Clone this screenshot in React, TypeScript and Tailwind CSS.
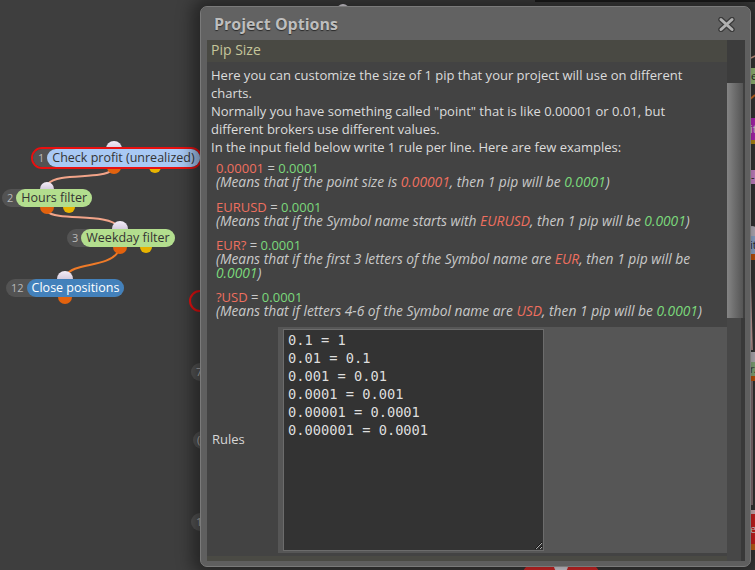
import React from "react";

const R = ({ children }: { children: React.ReactNode }) => (
  <span className="text-[#ef6f5f]">{children}</span>
);
const G = ({ children }: { children: React.ReactNode }) => (
  <span className="text-[#7bd97b]">{children}</span>
);

type NodeProps = {
  left: number;
  top: number;
  num: string;
  label: string;
  pill: string;
  selected?: boolean;
};

function GraphNode({ left, top, num, label, pill, selected }: NodeProps) {
  const inner = (
    <div className="flex h-[18px] items-center rounded-full bg-[#535353] font-['Open_Sans',sans-serif]">
      <span className="pl-[5px] pr-[3px] text-[11px] leading-[18px] text-[#b8b8b8]">{num}</span>
      <span className={`h-[18px] rounded-full px-[5px] text-[12.5px] leading-[18px] whitespace-nowrap ${pill}`}>
        {label}
      </span>
    </div>
  );
  return (
    <div className="absolute" style={{ left, top }}>
      {selected ? (
        <div className="rounded-full border-2 border-[#e81010]">{inner}</div>
      ) : (
        inner
      )}
    </div>
  );
}

function Dot({ x, y, r, cls }: { x: number; y: number; r: number; cls: string }) {
  return (
    <div
      className={`absolute rounded-full ${cls}`}
      style={{ left: x - r, top: y - r, width: r * 2, height: r * 2 }}
    />
  );
}

function Example({
  head,
  children,
  className,
}: {
  head: React.ReactNode;
  children: React.ReactNode;
  className: string;
}) {
  return (
    <div className={className}>
      <div>{head}</div>
      <div className="text-[13.8px] italic">{children}</div>
    </div>
  );
}

export default function App() {
  return (
    <div className="relative h-[570px] w-[755px] overflow-hidden bg-[#3e3e3e] font-['Open_Sans',sans-serif]">
      {/* top dark edge of another panel */}
      <div className="absolute left-[535px] top-0 h-[2px] w-[220px] bg-[#1c1c1c]" />

      {/* graph wires */}
      <svg className="absolute left-0 top-0" width="755" height="570">
        <path d="M112 170 C 102 180, 58 172, 48 184" stroke="#f2a489" strokeWidth="2" fill="none" />
        <path d="M47 211 C 56 222, 108 212, 119 227" stroke="#f2a489" strokeWidth="2" fill="none" />
        <path d="M118 252 C 108 268, 72 262, 66 276" stroke="#ee7a28" strokeWidth="2" fill="none" />
        <path d="M751 58 L755 56" stroke="#f2b4a0" strokeWidth="1.5" fill="none" />
        <path d="M749 100 L755 95" stroke="#ee7a28" strokeWidth="2" fill="none" />
        <path d="M750 270 L752 350" stroke="#f2c4c0" strokeWidth="1.5" fill="none" />
        <path d="M750 380 L749 540" stroke="#ee7a28" strokeWidth="2" fill="none" />
        <path d="M752 380 L752 505" stroke="#f4c8d0" strokeWidth="1" fill="none" />
      </svg>

      {/* connectors */}
      <Dot x={114} y={149} r={8} cls="bg-gradient-to-b from-[#f4eef8] to-[#b8aac4]" />
      <Dot x={114} y={167} r={7} cls="bg-[#e2620e]" />
      <Dot x={155} y={167} r={6} cls="bg-[#e8b400]" />
      <Dot x={47} y={189} r={7} cls="bg-gradient-to-b from-[#f4eef8] to-[#b8aac4]" />
      <Dot x={47} y={207} r={7} cls="bg-[#e2620e]" />
      <Dot x={69} y={207} r={6} cls="bg-[#e8b400]" />
      <Dot x={120} y={229} r={8} cls="bg-gradient-to-b from-[#f4eef8] to-[#b8aac4]" />
      <Dot x={120} y={247} r={7} cls="bg-[#e2620e]" />
      <Dot x={146} y={247} r={6} cls="bg-[#e8b400]" />
      <Dot x={65} y={279} r={8} cls="bg-gradient-to-b from-[#f4eef8] to-[#b8aac4]" />
      <Dot x={65} y={297} r={7} cls="bg-[#e2620e]" />

      {/* nodes */}
      <GraphNode left={31} top={147} num="1" label="Check profit (unrealized)" pill="bg-[#a9c9f4] text-[#333]" selected />
      <GraphNode left={2} top={189} num="2" label="Hours filter" pill="bg-[#b3de8e] text-[#333]" />
      <GraphNode left={67} top={229} num="3" label="Weekday filter" pill="bg-[#b3de8e] text-[#333]" />
      <GraphNode left={6} top={279} num="12" label="Close positions" pill="bg-[#4381bb] text-white" />

      {/* partial nodes hidden behind the dialog */}
      <div className="absolute left-[189px] top-[290px] h-[22px] w-[30px] rounded-full border-2 border-[#e81010]" />
      <div className="absolute left-[191px] top-[363px] flex h-[18px] w-[24px] items-center rounded-full bg-[#555] pl-[5px] text-[11px] text-[#bbb]">7</div>
      <div className="absolute left-[193px] top-[431px] flex h-[18px] w-[24px] items-center rounded-full bg-[#555] pl-[4px] text-[11px] text-[#bbb]">(</div>
      <div className="absolute left-[191px] top-[513px] flex h-[18px] w-[24px] items-center rounded-full bg-[#555] pl-[5px] text-[11px] text-[#bbb]">1</div>
      <Dot x={343} y={10} r={6} cls="bg-[#f2eef6]" />
      <div className="absolute left-[523px] top-[564px] h-[20px] w-[76px] rounded-full bg-[#ee2c2c]" />
      <Dot x={561} y={566} r={7} cls="bg-[#f2eef6]" />

      {/* right-side slivers of other nodes */}
      <div className="absolute left-[746px] top-[68px] h-[16px] w-[12px] overflow-hidden bg-[#b3de8e] pl-[5px] text-[11px] leading-[16px] text-[#333]">e</div>
      <div className="absolute left-[746px] top-[118px] h-[22px] w-[12px] overflow-hidden bg-[#d22fd6] pl-[4px] text-[11px] leading-[22px] text-white">it</div>
      <div className="absolute left-[746px] top-[140px] h-[4px] w-[12px] bg-[#d8a418]" />
      <div className="absolute left-[746px] top-[170px] h-[14px] w-[12px] overflow-hidden bg-[#f3a0f0] pl-[5px] text-[11px] leading-[14px] text-[#333]">-</div>
      <div className="absolute left-[746px] top-[226px] h-[10px] w-[12px] rounded-t-full bg-[#dcd6e2]" />
      <div className="absolute left-[746px] top-[236px] h-[18px] w-[12px] overflow-hidden bg-[#a9c9f4] pl-[4px] text-[11px] leading-[18px] text-[#333]">it</div>
      <div className="absolute left-[746px] top-[254px] h-[6px] w-[12px] bg-[#e2620e]" />
      <div className="absolute left-[746px] top-[352px] h-[10px] w-[12px] bg-[#d8d4dc]" />
      <div className="absolute left-[746px] top-[362px] h-[14px] w-[12px] overflow-hidden bg-[#9fc992] pl-[4px] text-[10px] leading-[14px] text-[#444]">rz</div>
      <div className="absolute left-[746px] top-[376px] h-[5px] w-[12px] bg-[#e2620e]" />
      <div className="absolute left-[746px] top-[510px] h-[4px] w-[12px] bg-[#f6d2d8]" />
      <div className="absolute left-[746px] top-[514px] h-[30px] w-[12px] overflow-hidden bg-[#f02828] pl-[4px] text-[11px] leading-[30px] text-white">el</div>
      <div className="absolute left-[746px] top-[544px] h-[6px] w-[12px] bg-[#e8741c]" />

      {/* dialog */}
      <div className="absolute left-[200px] top-[6px] flex h-[561px] w-[551px] flex-col rounded-[7px] border border-[#7a7a7a] bg-[#5f5f5f] shadow-[0_0_16px_8px_rgba(0,0,0,0.4)]">
        <div className="flex h-[33px] shrink-0 items-center justify-between rounded-t-[7px] bg-[#626262] pl-[13px] pr-[15px]">
          <span className="text-[16px] font-bold text-[#bebebe] [text-shadow:0_1px_1px_#2a2a2a]">
            Project Options
          </span>
          <svg width="17" height="15" viewBox="0 0 17 15" className="mt-[2px]">
            <path d="M3 2.5 L14 12.5 M14 2.5 L3 12.5" stroke="#3a3a3a" strokeWidth="5.5" strokeLinecap="round" />
            <path d="M3 2.5 L14 12.5 M14 2.5 L3 12.5" stroke="#b0b0b0" strokeWidth="3" strokeLinecap="round" />
          </svg>
        </div>

        <div className="mb-[5px] ml-[6px] mr-[5px] flex min-h-0 flex-1">
          {/* content */}
          <div className="flex min-w-0 flex-1 flex-col overflow-hidden bg-[#434343]">
            <div className="h-[22px] shrink-0 bg-[#494943] pl-[4px] text-[14px] leading-[20px] text-[#c6c69b]">
              Pip Size
            </div>
            <div className="px-[4px] pt-[4px] text-[13px] leading-[18px] whitespace-nowrap text-[#dcdcdc]">
              Here you can customize the size of 1 pip that your project will use on different
              <br />
              charts.
              <br />
              Normally you have something called "point" that is like 0.00001 or 0.01, but
              <br />
              different brokers use different values.
              <br />
              In the input field below write 1 rule per line. Here are few examples:
            </div>
            <div className="flex flex-col pl-[9px] text-[13px] leading-[14px] whitespace-nowrap text-[#c9c9c9]">
              <Example className="mt-[5px]" head={<><R>0.00001</R> = <G>0.0001</G></>}>
                (Means that if the point size is <R>0.00001</R>, then 1 pip will be <G>0.0001</G>)
              </Example>
              <Example className="mt-[11px]" head={<><R>EURUSD</R> = <G>0.0001</G></>}>
                (Means that if the Symbol name starts with <R>EURUSD</R>, then 1 pip will be <G>0.0001</G>)
              </Example>
              <Example className="mt-[10px]" head={<><R>EUR?</R> = <G>0.0001</G></>}>
                (Means that if the first 3 letters of the Symbol name are <R>EUR</R>, then 1 pip will be
                <br />
                <G>0.0001</G>)
              </Example>
              <Example className="mt-[10px]" head={<><R>?USD</R> = <G>0.0001</G></>}>
                (Means that if letters 4-6 of the Symbol name are <R>USD</R>, then 1 pip will be <G>0.0001</G>)
              </Example>
            </div>

            <div className="mt-[9px] flex h-[226px] shrink-0">
              <div className="flex w-[71px] shrink-0 items-center pl-[5px] text-[13px] text-[#d6d6d6]">Rules</div>
              <div className="flex-1 bg-[#565656] pl-[5px] pt-[2px]">
                <textarea
                  readOnly
                  defaultValue={"0.1 = 1\n0.01 = 0.1\n0.001 = 0.01\n0.0001 = 0.001\n0.00001 = 0.0001\n0.000001 = 0.0001"}
                  className="block h-[222px] w-[261px] resize border border-[#6c6c6c] bg-[#333333] px-[4px] pt-[1px] font-['DejaVu_Sans_Mono',monospace] text-[13.7px] leading-[18px] text-[#dedede] outline-none"
                />
              </div>
            </div>
            <div className="mt-[3px] h-[8px] shrink-0 bg-[#4a4a44]" />
          </div>

          {/* scrollbar */}
          <div className="flex w-[18px] shrink-0 flex-col bg-[#3f3f3f]">
            <div className="h-[43px] shrink-0 bg-[#3c3c3c]" />
            <div className="h-[235px] w-[16px] shrink-0 bg-gradient-to-r from-[#858585] via-[#6c6c6c] to-[#555]" />
            <div className="flex flex-1">
              <div className="w-[14px] bg-[#474747]" />
              <div className="flex-1 bg-[#393939]" />
            </div>
          </div>
        </div>
      </div>
    </div>
  );
}
